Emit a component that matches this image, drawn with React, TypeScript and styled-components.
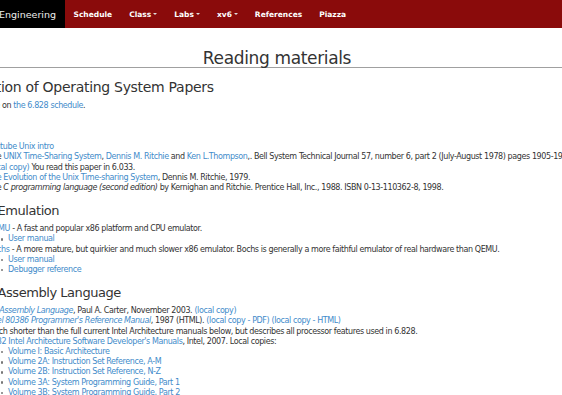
import React from 'react'
import styled, { createGlobalStyle } from 'styled-components'

const GlobalStyle = createGlobalStyle`
    html, body {
        margin: 0;
        padding: 0;
        background: #fff;
        overflow: hidden;
    }
    body {
        font-family: 'DejaVu Sans', Verdana, sans-serif;
        color: #333;
    }
`

const Page = styled.div`
    width: 562px;
    height: 395px;
    overflow: hidden;
`

const NavBar = styled.div`
    display: flex;
    height: 28px;
    background: #8a0b0b;
`

// brand text is wider than its box, flex-end pushes the overflow off to the left
const Brand = styled.div`
    display: flex;
    justify-content: flex-end;
    align-items: center;
    width: 65px;
    padding-right: 9px;
    box-sizing: border-box;
    overflow: hidden;
    background: #000;
    color: #eee;
    font-size: 9.5px;
    white-space: nowrap;
`

const NavLinks = styled.div`
    display: flex;
    align-items: stretch;
`

const NavItem = styled.a`
    display: flex;
    align-items: center;
    padding: 0 8.5px;
    color: #fff;
    font-size: 7.5px;
    font-weight: bold;
    text-decoration: none;
    white-space: nowrap;
`

const Caret = styled.span`
    display: inline-block;
    width: 0;
    height: 0;
    margin-left: 2px;
    border-top: 2.5px solid #ddd;
    border-left: 2.5px solid transparent;
    border-right: 2.5px solid transparent;
`

const Title = styled.h1`
    margin: 22px 0 0;
    padding-right: 8px;
    text-align: center;
    font-size: 17px;
    line-height: 17px;
    font-weight: normal;
    letter-spacing: -0.35px;
    color: #333;
    border-bottom: 1px solid #a0a0a0;
`

const Content = styled.div`
    margin-left: -29px;
    white-space: nowrap;
`

const PageHeading = styled.h2`
    margin: 11px 0 6px -7px;
    font-size: 14px;
    line-height: 16px;
    font-weight: normal;
    letter-spacing: -0.3px;
    color: #333;
`

const Heading = styled.h3`
    margin: 10px 0 5px;
    font-size: 13px;
    line-height: 16px;
    font-weight: normal;
    letter-spacing: -0.45px;
    color: #333;
`

const Block = styled.div<{ $top?: number }>`
    margin-top: ${p => p.$top || 0}px;
    padding-left: 16.5px;
    font-size: 8px;
    line-height: 10.2px;
    letter-spacing: -0.4px;
`

const Line = styled.div``

const Link = styled.a<{ $italic?: boolean }>`
    color: #428bca;
    text-decoration: none;
    font-style: ${p => (p.$italic ? 'italic' : 'normal')};
`

const SubList = styled.ul`
    margin: 0;
    padding-left: 13px;
    list-style: none;
`

const SubItem = styled.li`
    display: flex;
    align-items: center;

    &::before {
        content: '';
        flex: none;
        width: 2.6px;
        height: 2.6px;
        margin-right: 5px;
        border-radius: 50%;
        background: #777;
    }
`

const manuals = [
    'Volume I: Basic Architecture',
    'Volume 2A: Instruction Set Reference, A-M',
    'Volume 2B: Instruction Set Reference, N-Z',
    'Volume 3A: System Programming Guide, Part 1',
    'Volume 3B: System Programming Guide, Part 2'
]

const App: React.FC = () => {
    return (
        <Page>
            <GlobalStyle />
            <NavBar>
                <Brand>6.828: Operating System Engineering</Brand>
                <NavLinks>
                    <NavItem href='#'>Schedule</NavItem>
                    <NavItem href='#'>Class<Caret /></NavItem>
                    <NavItem href='#'>Labs<Caret /></NavItem>
                    <NavItem href='#'>xv6<Caret /></NavItem>
                    <NavItem href='#'>References</NavItem>
                    <NavItem href='#'>Piazza</NavItem>
                </NavLinks>
            </NavBar>

            <Title>Reading materials</Title>

            <Content>
                <PageHeading>Curation of Operating System Papers</PageHeading>
                <Block>
                    <Line>Are on <Link href='#'>the 6.828 schedule</Link>.</Line>
                </Block>

                <Block $top={31}>
                    <Line><Link href='#'>Youtube Unix intro</Link></Line>
                    <Line>
                        The <Link href='#'>UNIX Time-Sharing System</Link>, <Link href='#'>Dennis M. Ritchie</Link> and{' '}
                        <Link href='#'>Ken L.Thompson</Link>,. Bell System Technical Journal 57, number 6, part 2 (July-August 1978) pages 1905-1946.
                    </Line>
                    <Line><Link href='#'>(local copy)</Link> You read this paper in 6.033.</Line>
                    <Line><Link href='#'>The Evolution of the Unix Time-sharing System</Link>, Dennis M. Ritchie, 1979.</Line>
                    <Line>
                        The <i>C programming language (second edition)</i> by Kernighan and Ritchie. Prentice Hall, Inc., 1988. ISBN 0-13-110362-8, 1998.
                    </Line>
                </Block>

                <Heading>x86 Emulation</Heading>
                <Block>
                    <Line><Link href='#'>QEMU</Link> - A fast and popular x86 platform and CPU emulator.</Line>
                    <SubList>
                        <SubItem><Link href='#'>User manual</Link></SubItem>
                    </SubList>
                    <Line>
                        <Link href='#'>Bochs</Link> - A more mature, but quirkier and much slower x86 emulator. Bochs is generally a more faithful emulator of real hardware than QEMU.
                    </Line>
                    <SubList>
                        <SubItem><Link href='#'>User manual</Link></SubItem>
                        <SubItem><Link href='#'>Debugger reference</Link></SubItem>
                    </SubList>
                </Block>

                <Heading>x86 Assembly Language</Heading>
                <Block>
                    <Line><Link href='#' $italic>PC Assembly Language</Link>, Paul A. Carter, November 2003. <Link href='#'>(local copy)</Link></Line>
                    <Line>
                        <Link href='#' $italic>Intel 80386 Programmer's Reference Manual</Link>, 1987 (HTML). <Link href='#'>(local copy - PDF)</Link>{' '}
                        <Link href='#'>(local copy - HTML)</Link>
                    </Line>
                    <Line>Much shorter than the full current Intel Architecture manuals below, but describes all processor features used in 6.828.</Line>
                    <Line><Link href='#'>IA-32 Intel Architecture Software Developer's Manuals</Link>, Intel, 2007. Local copies:</Line>
                    <SubList>
                        {manuals.map(v => <SubItem key={v}><Link href='#'>{v}</Link></SubItem>)}
                    </SubList>
                </Block>
            </Content>
        </Page>
    )
}

export default App
